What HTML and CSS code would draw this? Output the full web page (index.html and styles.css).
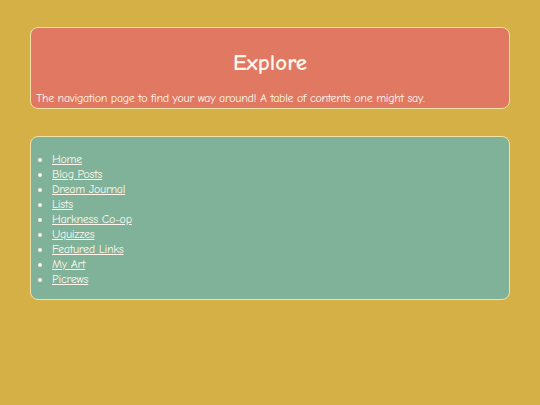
FILE: index.html
```html
<!DOCTYPE html>
<html lang="en">
<head>
<meta charset="utf-8">
<title>Explore</title>
<link rel="stylesheet" href="styles.css">
</head>
<body>
<div class="page">
  <header class="box header">
    <h1 class="title">Explore</h1>
    <p class="intro">The navigation page to find your way around! A table of contents one might say.</p>
  </header>
  <nav class="box nav">
    <ul class="links">
      <li><a href="#">Home</a></li>
      <li><a href="#">Blog Posts</a></li>
      <li><a href="#">Dream Journal</a></li>
      <li><a href="#">Lists</a></li>
      <li><a href="#">Harkness Co-op</a></li>
      <li><a href="#">Uquizzes</a></li>
      <li><a href="#">Featured Links</a></li>
      <li><a href="#">My Art</a></li>
      <li><a href="#">Picrews</a></li>
    </ul>
  </nav>
</div>
</body>
</html>
```
FILE: styles.css
```css
html, body {
  margin: 0;
  padding: 0;
  background: #d5b046;
}
body {
  font-family: "Comic Sans MS", "Comic Neue", "Lato", sans-serif;
  color: #fdf6ea;
}
.page {
  display: flex;
  flex-direction: column;
  gap: 27px;
  padding: 27px 30px;
}
.box {
  border: 1px solid #f3e2a6;
  border-radius: 8px;
}
.header {
  background: #e07862;
  padding: 0 5px 2px;
}
.title {
  margin: 22px 0 15px;
  font-size: 23px;
  line-height: 26px;
  font-weight: bold;
  text-align: center;
}
.intro {
  margin: 0;
  font-size: 12px;
  line-height: 15px;
  letter-spacing: -0.28px;
}
.nav {
  background: #80b29a;
}
.links {
  margin: 0;
  padding: 15px 0 12px 21px;
  font-size: 12px;
  line-height: 15px;
  letter-spacing: -0.25px;
}
.links a {
  color: #fdf6ea;
  text-decoration: underline;
}
```
